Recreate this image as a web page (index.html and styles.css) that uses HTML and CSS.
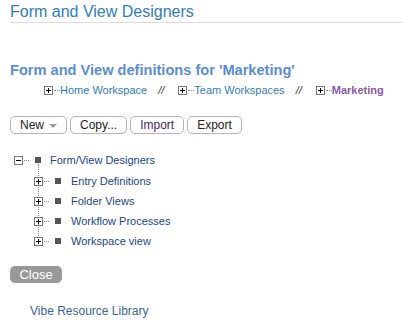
FILE: index.html
```html
<!DOCTYPE html>
<html>
<head>
<meta charset="utf-8">
<link rel="stylesheet" href="styles.css">
</head>
<body>
<div class="page">
  <h1 class="title">Form and View Designers</h1>
  <h2 class="heading">Form and View definitions for 'Marketing'</h2>
  <div class="crumbs">
    <span class="crumb"><span class="pbox">+</span><span class="dots"></span><a class="clink">Home Workspace</a></span>
    <span class="sep">//</span>
    <span class="crumb"><span class="pbox">+</span><span class="dots"></span><a class="clink">Team Workspaces</a></span>
    <span class="sep">//</span>
    <span class="crumb"><span class="pbox">+</span><span class="dots"></span><a class="clink current">Marketing</a></span>
  </div>
  <div class="buttons">
    <button class="btn">New <span class="caret"></span></button>
    <button class="btn">Copy...</button>
    <button class="btn import">Import</button>
    <button class="btn">Export</button>
  </div>
  <div class="tree">
    <div class="row root"><span class="pbox minus">−</span><span class="dots"></span><span class="sq"></span><span class="label">Form/View Designers</span></div>
    <div class="children">
      <div class="row child"><span class="vline"></span><span class="pbox">+</span><span class="dots"></span><span class="sq"></span><span class="label">Entry Definitions</span></div>
      <div class="row child"><span class="vline"></span><span class="pbox">+</span><span class="dots"></span><span class="sq"></span><span class="label">Folder Views</span></div>
      <div class="row child"><span class="vline"></span><span class="pbox">+</span><span class="dots"></span><span class="sq"></span><span class="label">Workflow Processes</span></div>
      <div class="row child"><span class="vline"></span><span class="pbox">+</span><span class="dots"></span><span class="sq"></span><span class="label">Workspace view</span></div>
    </div>
  </div>
  <button class="close">Close</button>
  <div class="footer">Vibe Resource Library</div>
</div>
</body>
</html>
```
FILE: styles.css
```css
html, body { margin: 0; padding: 0; background: #fff; }
body { font-family: "Liberation Sans", Arial, sans-serif; }
.page { padding: 0 0 0 10px; }
.title {
  margin: 0;
  padding-top: 2px;
  font-size: 16px;
  font-weight: normal;
  color: #2f7db8;
  line-height: 19px;
  border-bottom: 1px solid #ddd;
  padding-bottom: 1px;
}
.heading {
  margin: 38px 0 0 0;
  font-size: 14.6px;
  font-weight: bold;
  color: #5a8dd2;
  line-height: 18px;
}
.crumbs {
  margin: 3px 0 0 34px;
  font-size: 11px;
  line-height: 16px;
  display: flex;
  align-items: center;
}
.crumb { display: inline-flex; align-items: center; }
.sep { color: #333; font-style: italic; margin: 0 14px 0 11px; font-size: 11px; }
.pbox {
  display: inline-flex; align-items: center; justify-content: center;
  width: 9px; height: 9px; border: 1px solid #777; box-sizing: border-box;
  background: #fff;
  position: relative;
  font-size: 0;
}
.pbox::before, .pbox::after { content: ""; position: absolute; background: #000; }
.pbox::before { left: 1px; right: 1px; top: 3px; height: 1px; }
.pbox::after { top: 1px; bottom: 1px; left: 3px; width: 1px; }
.pbox.minus::after { display: none; }
.dots { display: inline-block; width: 6px; border-top: 1px dotted #888; margin: 0 0 0 1px; }
.clink { color: #2f7db8; text-decoration: none; }
.clink.current { color: #8a5aa8; font-weight: bold; }
.buttons { margin-top: 18px; display: flex; gap: 3px; }
.btn {
  font-family: "Liberation Sans", Arial, sans-serif;
  font-size: 12px;
  height: 18px;
  padding: 0 9px;
  border: 1px solid #b5b5b5;
  border-radius: 5px;
  background: #fff;
  color: #222;
  line-height: 16px;
  display: inline-flex; align-items: center;
}
.btn.import { color: #4a1d5e; }
.caret {
  display: inline-block; width: 0; height: 0; margin-left: 5px; margin-top: 2px;
  border-left: 4px solid transparent; border-right: 4px solid transparent; border-top: 4px solid #999;
}
.tree { margin-top: 16px; margin-left: 4px; font-size: 11px; }
.row { display: flex; align-items: center; height: 20px; position: relative; }
.row .sq { display: inline-block; width: 6px; height: 6px; background: #555; margin: 0 9px 0 6px; }
.root .dots { width: 5px; }
.children { margin-left: 20px; margin-top: 1px; }
.child .dots { width: 5px; }
.child .sq { margin-left: 6px; margin-right: 10px; }
.vline { position: absolute; left: 4px; top: -7px; height: 12px; border-left: 1px dotted #888; }
.label { color: #23468a; }
.close {
  margin-top: 15px;
  font-family: "Liberation Sans", Arial, sans-serif;
  font-size: 13px;
  background: #999;
  color: #fff;
  border: none;
  border-radius: 5px;
  height: 17px;
  width: 52px;
  padding: 0;
  line-height: 17px;
}
.footer { margin: 21px 0 0 20px; font-size: 12px; color: #3a6794; }
```
